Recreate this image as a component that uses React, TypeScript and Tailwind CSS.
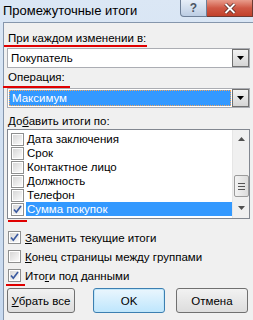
import React from 'react';

const Check = ({ checked }: { checked?: boolean }) => (
  <span className="w-[13px] h-[13px] border border-[#8e8f8f] bg-white p-[1px] shrink-0 flex">
    <span className="flex-1 bg-gradient-to-br from-[#d7d7d7] to-[#fbfbfb] flex items-center justify-center">
      {checked && (
        <svg width="9" height="9" viewBox="0 0 9 9">
          <path d="M1 4.5 L3.3 7.2 L8 1" stroke="#3b5aa0" strokeWidth="1.7" fill="none" />
        </svg>
      )}
    </span>
  </span>
);

const Arrow = () => (
  <svg width="7" height="4" viewBox="0 0 7 4">
    <path d="M0 0 H7 L3.5 4 Z" fill="#000" />
  </svg>
);

const ComboButton = () => (
  <div className="w-[17px] h-full border border-[#707070] bg-gradient-to-b from-[#f2f2f2] to-[#d5d5d5] flex items-center justify-center">
    <Arrow />
  </div>
);

const RedLine = ({ className }: { className: string }) => (
  <span className={`absolute h-[2px] bg-[#e00000] ${className}`} />
);

const items = [
  { label: 'Дата заключения', checked: false },
  { label: 'Срок', checked: false },
  { label: 'Контактное лицо', checked: false },
  { label: 'Должность', checked: false },
  { label: 'Телефон', checked: false },
  { label: 'Сумма покупок', checked: true },
];

const App = () => {
  return (
    <div className="w-[253px] h-[320px] overflow-hidden bg-gradient-to-b from-[#dbe7f5] to-[#c7d9ef] font-['Liberation_Sans',Arial,sans-serif] text-[11.5px] leading-[14px] text-black">
      {/* заголовок окна */}
      <div className="h-[22px] flex items-start relative">
        <span className="pl-[3px] pt-[3px] text-[13px] leading-[16px]">Промежуточные итоги</span>
        <div className="ml-auto flex h-[17px]">
          <div className="w-[27px] border border-[#6d7f97] rounded-bl-[4px] border-t-0 bg-gradient-to-b from-[#e6eef8] to-[#bccde3] flex items-center justify-center text-[#4b5563] font-bold text-[12px]">
            ?
          </div>
          <div className="w-[46px] border border-[#6d3a33] border-t-0 border-l-0 bg-gradient-to-b from-[#e89c8c] via-[#cf5845] to-[#c1412b] flex items-center justify-center">
            <svg width="12" height="11" viewBox="0 0 12 11">
              <path d="M1.5 1 L10.5 10 M10.5 1 L1.5 10" stroke="#4a1f1a" strokeWidth="3.4" />
              <path d="M1.5 1 L10.5 10 M10.5 1 L1.5 10" stroke="#fff" strokeWidth="2" />
            </svg>
          </div>
        </div>
      </div>

      {/* клиентская область */}
      <div className="ml-[3px] h-[298px] border-t border-l border-[#8596ac] bg-[#f0f0f0] pl-[3px] relative">
        <div className="w-[243px] flex flex-col">
          <div className="mt-[8px] ml-[1px] h-[14px]">При каждом изменении в:</div>
          <div className="mt-[3px] h-[20px] border border-[#abadb3] bg-white flex">
            <span className="flex-1 pl-[3px] flex items-center">Покупатель</span>
            <ComboButton />
          </div>

          <div className="mt-[2px] ml-[1px] h-[14px]">Операция:</div>
          <div className="mt-[4px] h-[20px] border border-[#abadb3] bg-white flex p-[1px]">
            <span className="flex-1 bg-[#3399ff] text-white pl-[2px] flex items-center border border-dotted border-[#f5a55a] mr-[1px]">
              Максимум
            </span>
            <div className="-my-[1px] -mr-[1px]">
              <ComboButton />
            </div>
          </div>

          <div className="mt-[6px] ml-[1px] h-[14px]">
            До<span className="underline">б</span>авить итоги по:
          </div>
          <div className="mt-[1px] h-[90px] border border-[#828790] bg-white flex">
            <div className="flex-1 pt-[2px] pl-[3px] flex flex-col">
              {items.map((it) => (
                <div key={it.label} className="h-[14px] flex items-center">
                  <Check checked={it.checked} />
                  <span
                    className={`ml-[2px] h-[14px] flex-1 pl-[1px] flex items-center ${
                      it.checked ? 'bg-[#3399ff] text-white' : ''
                    }`}
                  >
                    {it.label}
                  </span>
                </div>
              ))}
            </div>
            <div className="w-[17px] bg-[#f0f0f0] border-l border-[#e6e6e6] flex flex-col items-center">
              <div className="h-[17px] flex items-center justify-center">
                <svg width="7" height="4" viewBox="0 0 7 4">
                  <path d="M0 4 H7 L3.5 0 Z" fill="#505050" />
                </svg>
              </div>
              <div className="mt-[28px] w-[15px] h-[22px] border border-[#9b9b9b] rounded-[2px] bg-gradient-to-r from-[#f3f3f3] to-[#dcdcdc] flex flex-col items-center justify-center gap-[2px]">
                <span className="w-[7px] h-[1px] bg-[#555]" />
                <span className="w-[7px] h-[1px] bg-[#555]" />
                <span className="w-[7px] h-[1px] bg-[#555]" />
              </div>
              <div className="flex-1 flex items-center justify-center">
                <svg width="7" height="4" viewBox="0 0 7 4">
                  <path d="M0 0 H7 L3.5 4 Z" fill="#505050" />
                </svg>
              </div>
            </div>
          </div>

          <div className="mt-[9px] flex flex-col">
            <div className="h-[19px] flex items-center pl-[1px]">
              <Check checked />
              <span className="ml-[4px]">
                <span className="underline">З</span>аменить текущие итоги
              </span>
            </div>
            <div className="h-[19px] flex items-center pl-[1px]">
              <Check />
              <span className="ml-[4px]">
                <span className="underline">К</span>онец страницы между группами
              </span>
            </div>
            <div className="h-[19px] flex items-center pl-[1px]">
              <Check checked />
              <span className="ml-[4px]">
                Ито<span className="underline">г</span>и под данными
              </span>
            </div>
          </div>

          <div className="mt-[3px] h-[25px] flex">
            <button className="w-[68px] border border-[#707070] rounded-[3px] bg-gradient-to-b from-[#f2f2f2] to-[#dddddd]">
              <span className="underline">У</span>брать все
            </button>
            <button className="ml-[18px] w-[72px] border border-[#3c7fb1] rounded-[3px] bg-gradient-to-b from-[#eaf6fd] to-[#bee6fd] shadow-[inset_0_0_0_1px_#c0e6f9]">
              OK
            </button>
            <button className="ml-[11px] w-[72px] border border-[#707070] rounded-[3px] bg-gradient-to-b from-[#f2f2f2] to-[#dddddd]">
              Отмена
            </button>
          </div>
        </div>

        {/* красные пометки */}
        <RedLine className="left-[0px] top-[22px] w-[143px]" />
        <RedLine className="left-[-1px] top-[63px] w-[67px]" />
        <RedLine className="left-[4px] top-[197px] w-[19px]" />
        <RedLine className="left-[2px] top-[261px] w-[19px]" />
      </div>
    </div>
  );
};

export default App;
